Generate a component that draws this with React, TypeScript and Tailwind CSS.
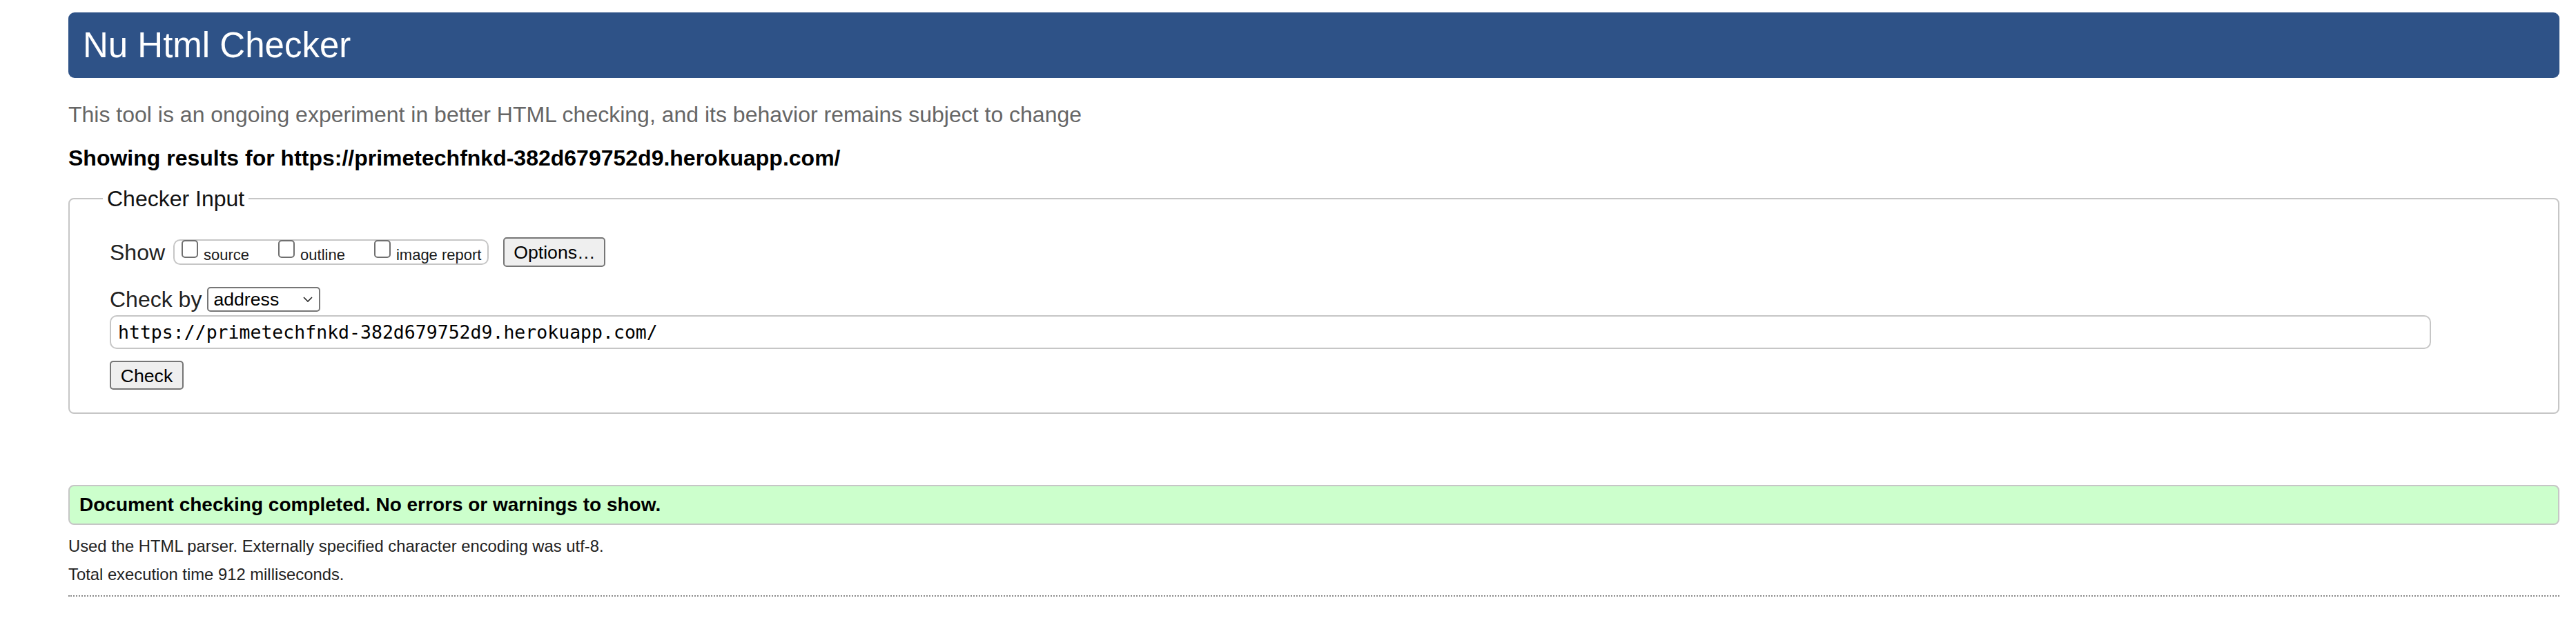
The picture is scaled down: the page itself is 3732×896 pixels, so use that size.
// Nu Html Checker result page
import React from 'react'

const URL = 'https://primetechfnkd-382d679752d9.herokuapp.com/'

function Checkbox({ label, last }: { label: string; last?: boolean }) {
  return (
    <label className={`flex ${last ? '' : 'mr-[42px]'}`}>
      <input
        type="checkbox"
        className="mt-[-1px] h-[26px] w-[24px] appearance-none self-start rounded-[5px] border-2 border-[#6f6f6f] bg-white"
      />
      <span className="ml-[8px] self-end text-[22px] leading-[25px] text-[#1a1a1a]">{label}</span>
    </label>
  )
}

export default function App() {
  return (
    <div className="min-h-[896px] bg-white font-['Liberation_Sans',Arial,sans-serif] text-[#222]">
      <div className="ml-[99px] mr-[24px] pt-[18px]">
        {/* header */}
        <h1 className="flex h-[95px] items-center rounded-[9px] bg-[#2e5287] pl-[21px] text-[51px] leading-none font-normal text-white">
          Nu Html Checker
        </h1>

        <p className="mt-[35px] text-[32px] leading-[36px] text-[#666]">
          This tool is an ongoing experiment in better HTML checking, and its behavior remains subject to change
        </p>
        <p className="mt-[27px] text-[32px] font-bold leading-[36px] text-black">Showing results for {URL}</p>

        {/* checker input */}
        <fieldset className="mt-[23px] rounded-[8px] border-2 border-[#c6c6c6] pt-[38px] pb-[33px] pl-[58px]">
          <legend className="ml-[-10px] px-[6px] text-[32px] leading-[36px] text-[#111]">Checker Input</legend>

          <div className="flex h-[43px] items-center">
            <span className="text-[32px] leading-[36px]">Show</span>
            <div className="ml-[12px] flex h-[37px] rounded-[10px] border-2 border-[#c6c6c6] pr-[9px] pl-[10px]">
              <Checkbox label="source" />
              <Checkbox label="outline" />
              <Checkbox label="image report" last />
            </div>
            <button className="ml-[21px] h-[43px] w-[148px] rounded-[5px] border-2 border-[#767676] bg-[#efefef] text-[26.67px] text-black">
              Options…
            </button>
          </div>

          <div className="mt-[29px] flex h-[36px] items-center">
            <span className="text-[32px] leading-[36px]">Check by</span>
            <div className="ml-[8px] flex h-[36px] w-[164px] items-center justify-between rounded-[5px] border-2 border-[#767676] bg-white pr-[9px] pl-[7px]">
              <span className="text-[26.67px] leading-none text-black">address</span>
              <svg width="14" height="8" viewBox="0 0 14 8" fill="none">
                <polyline points="1,1 7,7 13,1" stroke="#222" strokeWidth="1.6" />
              </svg>
            </div>
          </div>

          <div className="mt-[5px] flex h-[49px] w-[3363px] items-center rounded-[10px] border-2 border-[#c6c6c6] bg-white pl-[10px] font-['DejaVu_Sans_Mono',monospace] text-[26.5px] text-black">
            {URL}
          </div>

          <button className="mt-[17px] h-[42px] w-[107px] rounded-[5px] border-2 border-[#767676] bg-[#efefef] text-[26.67px] text-black">
            Check
          </button>
        </fieldset>

        {/* result */}
        <div className="mt-[103px] flex h-[58px] items-center rounded-[8px] border-2 border-[#c6c6c6] bg-[#ccffcc] pl-[14px] text-[28px] font-bold text-black">
          Document checking completed. No errors or warnings to show.
        </div>
        <p className="mt-[17px] text-[23.8px] leading-[27px] text-[#222]">
          Used the HTML parser. Externally specified character encoding was utf-8.
        </p>
        <p className="mt-[14px] text-[23.8px] leading-[27px] text-[#222]">Total execution time 912 milliseconds.</p>
        <div className="mt-[17px] border-t-2 border-dotted border-[#8a8a8a]" />
      </div>
    </div>
  )
}
